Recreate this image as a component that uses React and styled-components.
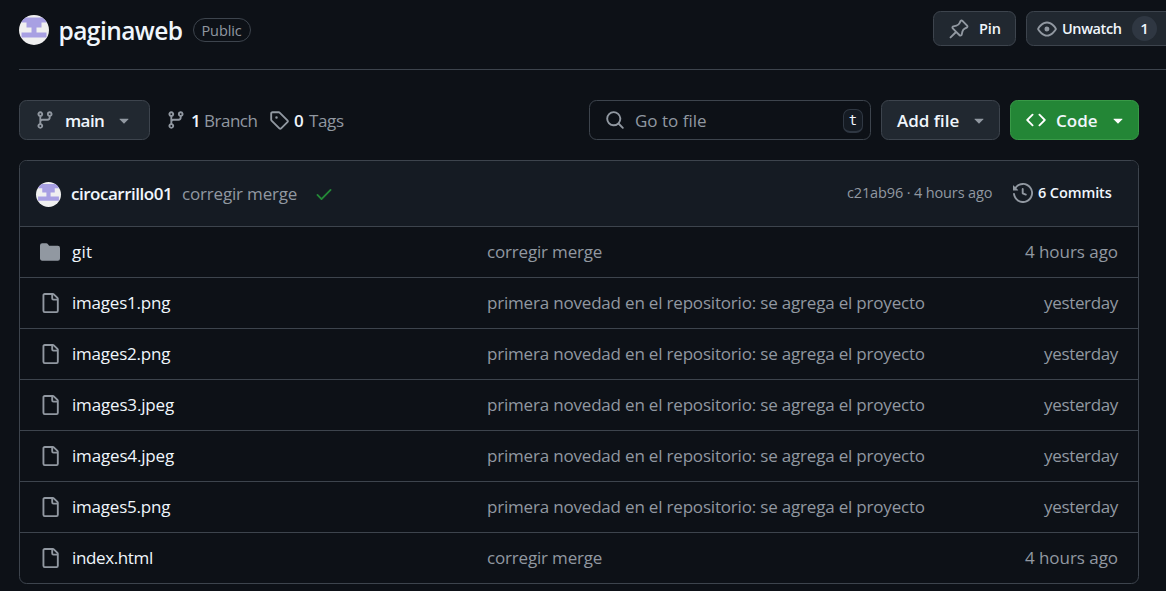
import React from "react";
import styled, { createGlobalStyle } from "styled-components";

const Global = createGlobalStyle`
  * { box-sizing: border-box; }
  body {
    margin: 0;
    background: #0d1117;
    color: #f0f6fc;
    font-family: "Open Sans", "Noto Sans", sans-serif;
    overflow: hidden;
  }
`;

const paths = {
  branch: "M9.5 3.25a2.25 2.25 0 1 1 3 2.122V6A2.5 2.5 0 0 1 10 8.5H6a1 1 0 0 0-1 1v1.128a2.251 2.251 0 1 1-1.5 0V5.372a2.25 2.25 0 1 1 1.5 0v1.836A2.493 2.493 0 0 1 6 7h4a1 1 0 0 0 1-1v-.628A2.25 2.25 0 0 1 9.5 3.25Zm-6 0a.75.75 0 1 0 1.5 0 .75.75 0 0 0-1.5 0Zm8.25-.75a.75.75 0 1 0 0 1.5.75.75 0 0 0 0-1.5ZM4.25 12a.75.75 0 1 0 0 1.5.75.75 0 0 0 0-1.5Z",
  tag: "M1 7.775V2.75C1 1.784 1.784 1 2.75 1h5.025c.464 0 .91.184 1.238.513l6.25 6.25a1.75 1.75 0 0 1 0 2.474l-5.026 5.026a1.75 1.75 0 0 1-2.474 0l-6.25-6.25A1.752 1.752 0 0 1 1 7.775Zm1.5 0c0 .066.026.13.073.177l6.25 6.25a.25.25 0 0 0 .354 0l5.025-5.025a.25.25 0 0 0 0-.354l-6.25-6.25a.25.25 0 0 0-.177-.073H2.75a.25.25 0 0 0-.25.25ZM6 5a1 1 0 1 1 0 2 1 1 0 0 1 0-2Z",
  search: "M10.68 11.74a6 6 0 0 1-7.922-8.982 6 6 0 0 1 8.982 7.922l3.04 3.04a.749.749 0 0 1-.326 1.275.749.749 0 0 1-.734-.215ZM11.5 7a4.499 4.499 0 1 0-8.997 0A4.499 4.499 0 0 0 11.5 7Z",
  code: "m11.28 3.22 4.25 4.25a.75.75 0 0 1 0 1.06l-4.25 4.25a.749.749 0 0 1-1.275-.326.749.749 0 0 1 .215-.734L13.94 8l-3.72-3.72a.749.749 0 0 1 .326-1.275.749.749 0 0 1 .734.215Zm-6.56 0a.751.751 0 0 1 1.042.018.751.751 0 0 1 .018 1.042L2.06 8l3.72 3.72a.749.749 0 0 1-.326 1.275.749.749 0 0 1-.734-.215L.47 8.53a.75.75 0 0 1 0-1.06Z",
  history: "m.427 1.927 1.215 1.215a8.002 8.002 0 1 1-1.6 5.685.75.75 0 1 1 1.493-.154 6.5 6.5 0 1 0 1.18-4.458l1.358 1.358A.25.25 0 0 1 3.896 6H.25A.25.25 0 0 1 0 5.75V2.104a.25.25 0 0 1 .427-.177ZM7.75 4a.75.75 0 0 1 .75.75v2.992l2.028.812a.75.75 0 0 1-.557 1.392l-2.5-1A.751.751 0 0 1 7 8.25v-3.5A.75.75 0 0 1 7.75 4Z",
  file: "M2 1.75C2 .784 2.784 0 3.75 0h6.586c.464 0 .909.184 1.237.513l2.914 2.914c.329.328.513.773.513 1.237v9.586A1.75 1.75 0 0 1 13.25 16h-9.5A1.75 1.75 0 0 1 2 14.25Zm1.75-.25a.25.25 0 0 0-.25.25v12.5c0 .138.112.25.25.25h9.5a.25.25 0 0 0 .25-.25V6h-2.75A1.75 1.75 0 0 1 9 4.25V1.5Zm6.75.062V4.25c0 .138.112.25.25.25h2.688l-.011-.013-2.914-2.914-.013-.011Z",
  folder: "M1.75 1A1.75 1.75 0 0 0 0 2.75v10.5C0 14.216.784 15 1.75 15h12.5A1.75 1.75 0 0 0 16 13.25v-8.5A1.75 1.75 0 0 0 14.25 3H7.5a.25.25 0 0 1-.2-.1l-.9-1.2C6.07 1.26 5.55 1 5 1H1.75Z",
  pin: "m11.294.984 3.722 3.722a1.75 1.75 0 0 1-.504 2.826l-1.327.613a3.089 3.089 0 0 0-1.707 2.084l-.584 2.454c-.317 1.332-1.972 1.8-2.94.832L5.75 11.311 1.78 15.28a.749.749 0 1 1-1.06-1.06l3.969-3.97-2.204-2.204c-.968-.968-.5-2.623.832-2.94l2.454-.584a3.08 3.08 0 0 0 2.084-1.707l.613-1.327a1.75 1.75 0 0 1 2.826-.504ZM6.283 9.723l2.732 2.731a.25.25 0 0 0 .42-.119l.584-2.454a4.586 4.586 0 0 1 2.537-3.098l1.328-.613a.25.25 0 0 0 .072-.404l-3.722-3.722a.25.25 0 0 0-.404.072l-.613 1.328a4.584 4.584 0 0 1-3.098 2.537l-2.454.584a.25.25 0 0 0-.119.42l2.731 2.732Z",
  eye: "M8 2c1.981 0 3.671.992 4.933 2.078 1.27 1.091 2.187 2.345 2.637 3.023a1.62 1.62 0 0 1 0 1.798c-.45.678-1.367 1.932-2.637 3.023C11.67 13.008 9.981 14 8 14c-1.981 0-3.671-.992-4.933-2.078C1.797 10.83.88 9.576.43 8.898a1.62 1.62 0 0 1 0-1.798c.45-.677 1.367-1.931 2.637-3.022C4.33 2.992 6.019 2 8 2ZM1.679 7.932a.12.12 0 0 0 0 .136c.411.622 1.241 1.75 2.366 2.717C5.176 11.758 6.527 12.5 8 12.5c1.473 0 2.825-.742 3.955-1.715 1.124-.967 1.954-2.096 2.366-2.717a.12.12 0 0 0 0-.136c-.412-.621-1.242-1.75-2.366-2.717C10.824 4.242 9.473 3.5 8 3.5c-1.473 0-2.825.742-3.955 1.715-1.124.967-1.954 2.096-2.366 2.717ZM8 10a2 2 0 1 1-.001-3.999A2 2 0 0 1 8 10Z",
  check: "M13.78 4.22a.75.75 0 0 1 0 1.06l-7.25 7.25a.75.75 0 0 1-1.06 0L2.22 9.28a.751.751 0 0 1 .018-1.042.751.751 0 0 1 1.042-.018L6 10.94l6.72-6.72a.75.75 0 0 1 1.06 0Z",
  caret: "m4.427 7.427 3.396 3.396a.25.25 0 0 0 .354 0l3.396-3.396A.25.25 0 0 0 11.396 7H4.604a.25.25 0 0 0-.177.427Z",
};

const Svg = styled.svg`
  display: block;
  flex: none;
  width: 20px;
  height: 20px;
  fill: ${(p) => p.$color || "#9198a1"};
`;
const Icon = ({ name, color }) => (
  <Svg viewBox="0 0 16 16" $color={color} aria-hidden="true">
    <path d={paths[name]} />
  </Svg>
);

const AvatarSvg = styled.svg`
  display: block;
  flex: none;
  width: ${(p) => p.$size}px;
  height: ${(p) => p.$size}px;
  border-radius: 50%;
  background: #f0f0f0;
`;
const Avatar = ({ size }) => (
  <AvatarSvg $size={size} viewBox="0 0 30 30">
    <path fill="#a8a0e3" d="M2.5 2.5h25v5h-5v5h-5v5h10v5h-25v-5h10v-5h-5v-5h-5z" />
  </AvatarSvg>
);

/* Fixed-width run of text, so the parts beside it keep their place */
const Text = styled.span`
  flex: none;
  width: ${(p) => p.$w}px;
  padding-top: ${(p) => p.$drop || 0}px;
  font-size: ${(p) => p.$size || 17}px;
  font-weight: ${(p) => (p.$bold ? 600 : 400)};
  letter-spacing: ${(p) => p.$track || 0}px;
  color: ${(p) => (p.$muted ? "#9198a1" : "#f0f6fc")};
  line-height: 26px;
  white-space: nowrap;
`;

const Page = styled.main`
  width: 1166px;
  height: 591px;
  overflow: hidden;
`;
const Header = styled.header`
  display: flex;
  align-items: center;
  height: 70px;
  margin-left: 19px;
  border-bottom: 1px solid #3d444d;
  padding-bottom: 9px;
`;
const RepoName = styled.h1`
  display: flex;
  margin: 1px 0 0 9.5px;
`;
const Badge = styled.span`
  display: flex;
  align-items: center;
  width: 58px;
  height: 24px;
  margin-left: 10.5px;
  padding-left: 7.5px;
  border: 1px solid #3d444d;
  border-radius: 12px;
`;
const HeaderActions = styled.div`
  display: flex;
  gap: 10px;
  margin: -3px -20px 0 auto;
`;
const Button = styled.button`
  display: flex;
  align-items: center;
  flex: none;
  width: ${(p) => p.$width}px;
  height: ${(p) => p.$height || 40}px;
  padding: 0 0 0 ${(p) => p.$pad}px;
  gap: ${(p) => p.$gap}px;
  border: 1px solid ${(p) => (p.$primary ? "#389a47" : "#3d444d")};
  border-radius: 7.5px;
  background: ${(p) => (p.$primary ? "#238636" : "#212830")};
  font-family: inherit;
  text-align: left;
`;
const Counter = styled.span`
  display: flex;
  align-items: center;
  justify-content: center;
  width: 25px;
  height: 25px;
  padding-bottom: 1px;
  border-radius: 50%;
  background: #2f3742;
  font-size: 15px;
  font-weight: 600;
  color: #f0f6fc;
`;

const Toolbar = styled.div`
  display: flex;
  align-items: center;
  margin: 30px 27px 20px 19px;
`;
const Stat = styled.div`
  display: flex;
  align-items: center;
  margin-left: ${(p) => p.$left}px;
  gap: 5px;
`;
const Search = styled.div`
  display: flex;
  align-items: center;
  width: 282px;
  height: 40px;
  margin: 0 10px 0 auto;
  padding: 0 7px 0 15px;
  gap: 10px;
  border: 1px solid #3d444d;
  border-radius: 7.5px;
`;
const Key = styled.kbd`
  display: flex;
  align-items: center;
  justify-content: center;
  width: 20px;
  height: 24px;
  margin: 1px 0 0 auto;
  border: 1px solid #2f3742;
  border-bottom-width: 2px;
  border-radius: 7px;
  background: #151b23;
  color: #f0f6fc;
  font: 14px "DejaVu Sans Mono", monospace;
`;
const Actions = styled.div`
  display: flex;
  gap: 10px;
`;

const Files = styled.section`
  width: 1120px;
  margin-left: 19px;
  border: 1px solid #3d444d;
  border-radius: 7.5px;
  overflow: hidden;
`;
const CommitBar = styled.div`
  display: flex;
  align-items: center;
  height: 65px;
  padding: 1px 0 0 16px;
  background: #151b23;
`;
const CommitText = styled.div`
  display: flex;
  gap: 10px;
  margin: -1px 16px 0 10px;
`;
const CommitMeta = styled.div`
  display: flex;
  align-items: center;
  margin: -3px 26px 0 auto;
`;
const History = styled.div`
  display: flex;
  align-items: center;
  gap: 5px;
  margin-left: 20px;
`;
const Row = styled.div`
  display: grid;
  grid-template-columns: 52px 415px 1fr auto;
  align-items: center;
  height: 51px;
  padding-right: 20px;
  border-top: 1px solid #3d444d;
`;
const IconCell = styled.div`
  padding-left: 20px;
`;

const first = {
  message: "primera novedad en el repositorio: se agrega el proyecto",
  messageTrack: -0.19,
  age: "yesterday",
  ageTrack: -0.35,
};
const fix = {
  message: "corregir merge",
  messageTrack: -0.18,
  age: "4 hours ago",
  ageTrack: -0.05,
};
const rows = [
  { name: "git", track: 0.3, icon: "folder", ...fix },
  { name: "images1.png", track: -0.22, ...first },
  { name: "images2.png", track: -0.22, ...first },
  { name: "images3.jpeg", track: -0.17, ...first },
  { name: "images4.jpeg", track: -0.17, ...first },
  { name: "images5.png", track: -0.22, ...first },
  { name: "index.html", track: -0.37, ...fix },
];

export default function App() {
  return (
    <Page>
      <Global />
      <Header>
        <Avatar size={30} />
        <RepoName>
          <Text $w={124} $size={24.5} $track={-0.55} $bold>paginaweb</Text>
        </RepoName>
        <Badge>
          <Text $w={42} $size={14.5} $track={-0.1} $drop={1} $muted>Public</Text>
        </Badge>
        <HeaderActions>
          <Button $width={83} $height={35} $pad={15} $gap={10}>
            <Icon name="pin" />
            <Text $w={22} $size={14.5} $track={-0.1} $bold>Pin</Text>
          </Button>
          <Button $width={160} $height={35} $pad={10} $gap={5}>
            <Icon name="eye" />
            <Text $w={65} $size={14.5} $track={-0.4} $bold>Unwatch</Text>
            <Counter>1</Counter>
          </Button>
        </HeaderActions>
      </Header>

      <Toolbar>
        <Button $width={131} $pad={15} $gap={10}>
          <Icon name="branch" />
          <Text $w={39} $track={-0.6} $drop={1} $bold>main</Text>
          <Icon name="caret" />
        </Button>
        <Stat $left={16}>
          <Icon name="branch" />
          <Text $w={8} $drop={1} $bold>1</Text>
          <Text $w={54} $track={-0.5} $drop={1} $muted>Branch</Text>
        </Stat>
        <Stat $left={11}>
          <Icon name="tag" />
          <Text $w={10} $drop={1} $bold>0</Text>
          <Text $w={35} $track={-0.35} $drop={1} $muted>Tags</Text>
        </Stat>
        <Search>
          <Icon name="search" />
          <Text $w={72} $drop={1} $muted>Go to file</Text>
          <Key>t</Key>
        </Search>
        <Actions>
          <Button $width={119} $pad={15} $gap={9}>
            <Text $w={63} $drop={1} $bold>Add file</Text>
            <Icon name="caret" />
          </Button>
          <Button $width={129} $pad={15} $gap={10} $primary>
            <Icon name="code" color="#fff" />
            <Text $w={42} $drop={1} $bold>Code</Text>
            <Icon name="caret" color="#fff" />
          </Button>
        </Actions>
      </Toolbar>

      <Files>
        <CommitBar>
          <Avatar size={25} />
          <CommitText>
            <Text $w={101} $track={-0.48} $bold>cirocarrillo01</Text>
            <Text $w={116} $track={-0.18} $muted>corregir merge</Text>
          </CommitText>
          <Icon name="check" color="#238636" />
          <CommitMeta>
            <Text $w={146} $size={14.5} $track={-0.14} $drop={1} $muted>c21ab96 · 4 hours ago</Text>
            <History>
              <Icon name="history" />
              <Text $w={74} $size={14.5} $track={-0.1} $drop={1} $bold>6 Commits</Text>
            </History>
          </CommitMeta>
        </CommitBar>
        {rows.map((row) => (
          <Row key={row.name}>
            <IconCell>
              <Icon name={row.icon || "file"} />
            </IconCell>
            <Text $track={row.track}>{row.name}</Text>
            <Text $track={row.messageTrack} $muted>{row.message}</Text>
            <Text $track={row.ageTrack} $muted>{row.age}</Text>
          </Row>
        ))}
      </Files>
    </Page>
  );
}
